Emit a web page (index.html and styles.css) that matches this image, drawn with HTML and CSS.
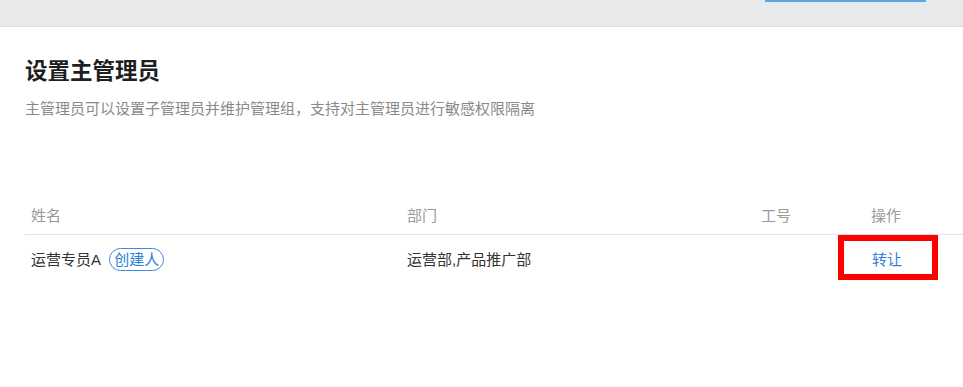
FILE: index.html
```html
<!DOCTYPE html>
<html lang="zh-CN">
<head>
    <meta charset="UTF-8">
    <meta name="viewport" content="width=device-width, initial-scale=1.0">
    <title>设置主管理员</title>
    <link rel="stylesheet" href="styles.css">
</head>
<body>
<div class="top-bar">
    <div class="top-tab"></div>
</div>
<div class="page">
    <h1 class="page-title">设置主管理员</h1>
    <p class="page-desc">主管理员可以设置子管理员并维护管理组，支持对主管理员进行敏感权限隔离</p>

    <table class="admin-table">
        <thead>
            <tr>
                <th class="col-name">姓名</th>
                <th class="col-dept">部门</th>
                <th class="col-no">工号</th>
                <th class="col-op">操作</th>
            </tr>
        </thead>
        <tbody>
            <tr>
                <td>运营专员A <span class="tag">创建人</span></td>
                <td>运营部,产品推广部</td>
                <td></td>
                <td class="op-cell">
                    <a class="link" href="#">转让</a>
                    <span class="highlight"></span>
                </td>
            </tr>
        </tbody>
    </table>
</div>
</body>
</html>
```

FILE: styles.css
```css
* {
    box-sizing: border-box;
    margin: 0;
    padding: 0;
}

body {
    font-family: 'Liberation Sans', 'Noto Sans CJK SC', sans-serif;
    background-color: #fff;
    color: #333;
    overflow: hidden;
}

.top-bar {
    height: 27px;
    background-color: #e8e9eb;
    border-bottom: 1px solid #dadbdd;
    padding-left: 765px;
}

.top-tab {
    width: 161px;
    height: 2px;
    background-color: #5ba6e6;
}

.page {
    padding: 30px 0 0 25px;
}

.page-title {
    font-size: 22.5px;
    line-height: 30px;
    font-weight: bold;
    color: #1f1f1f;
}

.page-desc {
    margin-top: 11px;
    font-size: 15px;
    line-height: 22px;
    color: #8a8a8a;
}

.admin-table {
    margin-top: 86px;
    width: 938px;
    border-collapse: collapse;
    table-layout: fixed;
    font-size: 15px;
}

.admin-table th {
    text-align: left;
    font-weight: normal;
    color: #999;
    line-height: 20px;
    padding: 0 6px 8px;
    border-bottom: 1px solid #e2e2e2;
}

.admin-table td {
    line-height: 20px;
    padding: 13px 6px 14px;
    color: #333;
    vertical-align: middle;
}

.col-name {
    width: 376px;
}

.col-dept {
    width: 354px;
}

.col-no {
    width: 110px;
}

.tag {
    display: inline-block;
    margin-left: 5px;
    padding: 0 4px;
    height: 23px;
    line-height: 21px;
    border: 1px solid #3b8be2;
    border-radius: 12px;
    color: #2f7fd9;
}

.admin-table .op-cell {
    position: relative;
}

.link {
    color: #2f7fd9;
    text-decoration: none;
    padding-left: 1px;
}

.highlight {
    position: absolute;
    left: -27px;
    top: 0;
    width: 100px;
    height: 45px;
    border: 6px solid #ff0000;
}
```
